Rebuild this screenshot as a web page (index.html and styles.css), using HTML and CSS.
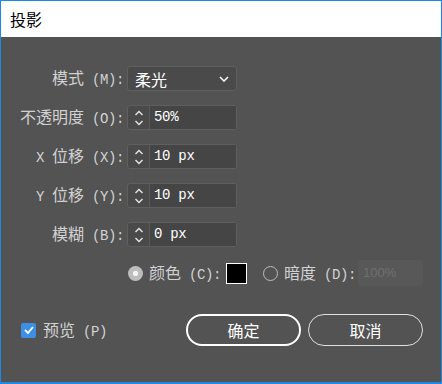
FILE: index.html
```html
<!DOCTYPE html>
<html lang="zh-CN">
<head>
    <meta charset="UTF-8">
    <title>投影</title>
    <link rel="stylesheet" href="styles.css">
</head>
<body>

    <div class="window">
        <header class="titlebar">投影</header>

        <section class="dialog">
            <div class="fields">
                <label class="field-label">模式<span class="key"> (M):</span></label>
                <div class="select">
                    <span>柔光</span>
                    <svg class="chevron" width="10" height="6" viewBox="0 0 10 6"><path d="M1 1l4 4 4-4" fill="none" stroke="#fff" stroke-width="1.5"/></svg>
                </div>

                <label class="field-label">不透明度<span class="key"> (O):</span></label>
                <div class="spin">
                    <span class="spin-arrows">
                        <svg width="10" height="18" viewBox="0 0 10 18"><path d="M1.5 6l3.5-3.5 3.5 3.5M1.5 12l3.5 3.5 3.5-3.5" fill="none" stroke="#e6e6e6" stroke-width="1.4"/></svg>
                    </span>
                    <span class="spin-value">50%</span>
                </div>

                <label class="field-label"><span class="key">X </span>位移<span class="key"> (X):</span></label>
                <div class="spin">
                    <span class="spin-arrows">
                        <svg width="10" height="18" viewBox="0 0 10 18"><path d="M1.5 6l3.5-3.5 3.5 3.5M1.5 12l3.5 3.5 3.5-3.5" fill="none" stroke="#e6e6e6" stroke-width="1.4"/></svg>
                    </span>
                    <span class="spin-value">10 px</span>
                </div>

                <label class="field-label"><span class="key">Y </span>位移<span class="key"> (Y):</span></label>
                <div class="spin">
                    <span class="spin-arrows">
                        <svg width="10" height="18" viewBox="0 0 10 18"><path d="M1.5 6l3.5-3.5 3.5 3.5M1.5 12l3.5 3.5 3.5-3.5" fill="none" stroke="#e6e6e6" stroke-width="1.4"/></svg>
                    </span>
                    <span class="spin-value">10 px</span>
                </div>

                <label class="field-label">模糊<span class="key"> (B):</span></label>
                <div class="spin">
                    <span class="spin-arrows">
                        <svg width="10" height="18" viewBox="0 0 10 18"><path d="M1.5 6l3.5-3.5 3.5 3.5M1.5 12l3.5 3.5 3.5-3.5" fill="none" stroke="#e6e6e6" stroke-width="1.4"/></svg>
                    </span>
                    <span class="spin-value">0 px</span>
                </div>
            </div>

            <div class="color-row">
                <span class="radio checked"></span>
                <span class="radio-label">颜色<span class="key"> (C):</span></span>
                <span class="swatch"></span>
                <span class="radio"></span>
                <span class="radio-label">暗度<span class="key"> (D):</span></span>
                <span class="disabled-input">100%</span>
            </div>

            <div class="footer">
                <div class="preview">
                    <span class="checkbox">
                        <svg width="10" height="8" viewBox="0 0 10 8"><path d="M1 4l3 3 5-6" fill="none" stroke="#fff" stroke-width="1.8"/></svg>
                    </span>
                    <span>预览<span class="key"> (P)</span></span>
                </div>
                <button class="btn btn-primary">确定</button>
                <button class="btn">取消</button>
            </div>
        </section>
    </div>

</body>
</html>
```

FILE: styles.css
```css
body {
    margin: 0;
    font-family: 'Noto Sans CJK SC', sans-serif;
    font-size: 16px;
}

.window {
    width: 442px;
    height: 384px;
    box-sizing: border-box;
    border: 1px solid #1e88e5;
    border-bottom-width: 2px;
    background-color: #535353;
    display: flex;
    flex-direction: column;
}

.titlebar {
    height: 36px;
    background-color: #fff;
    color: #000;
    font-size: 16px;
    line-height: 36px;
    padding-left: 9px;
}

.dialog {
    flex: 1;
    padding-top: 29px;
    color: #d2d2d2;
}

/* latin parts are half-width, 8px per char */
.key {
    font-family: 'Liberation Mono', monospace;
    font-size: 14px;
    letter-spacing: -0.4px;
}

.fields {
    display: grid;
    grid-template-columns: 123px 110px;
    column-gap: 3px;
    row-gap: 14px;
    align-items: center;
}

.field-label {
    text-align: right;
    line-height: 20px;
    white-space: nowrap;
}

.select,
.spin {
    height: 25px;
    box-sizing: border-box;
    border: 1px solid #5f5f5f;
    border-radius: 3px;
    background-color: #4a4a4a;
    display: flex;
    align-items: center;
}

.select {
    justify-content: space-between;
    padding: 0 7px 0 7px;
    color: #fff;
    line-height: 20px;
}

.chevron {
    margin-top: 1px;
}

.spin-arrows {
    width: 21px;
    height: 100%;
    display: flex;
    align-items: center;
    justify-content: center;
    border-right: 1px solid #5a5a5a;
}

.spin-value {
    flex: 1;
    height: 100%;
    line-height: 22px;
    padding-left: 4px;
    background-color: #454545;
    color: #fff;
    font-family: 'Liberation Mono', monospace;
    font-size: 14px;
    letter-spacing: -0.3px;
}

.color-row {
    display: flex;
    align-items: center;
    margin: 13px 0 0 127px;
    height: 26px;
    line-height: 20px;
}

.radio {
    width: 15px;
    height: 15px;
    border: 1.5px solid #bdbdbd;
    border-radius: 50%;
    box-sizing: border-box;
    margin-right: 6px;
}

.radio.checked {
    border: none;
    background: radial-gradient(circle, #f4f4f4 0 2.5px, #bdbdbd 3px);
}

.radio-label {
    margin-right: 5px;
}

.swatch {
    width: 21px;
    height: 21px;
    box-sizing: border-box;
    border: 1px solid #fff;
    background-color: #000;
    margin-right: 16px;
}

.disabled-input {
    width: 65px;
    height: 26px;
    box-sizing: border-box;
    margin-left: -3px;
    padding-left: 5px;
    line-height: 26px;
    background-color: #585858;
    border-radius: 3px;
    color: #707070;
    font-family: 'Liberation Sans', sans-serif;
    font-size: 13px;
}

.footer {
    display: flex;
    align-items: center;
    margin-top: 28px;
    padding-left: 20px;
}

.preview {
    display: flex;
    align-items: center;
    gap: 7px;
    width: 165px;
    line-height: 20px;
}

.checkbox {
    width: 15px;
    height: 15px;
    border-radius: 2px;
    background-color: #3d8ee5;
    display: flex;
    align-items: center;
    justify-content: center;
}

.btn {
    width: 115px;
    height: 32px;
    margin-right: 7px;
    background: transparent;
    border: 1px solid #e0e0e0;
    border-radius: 16px;
    color: #fff;
    font-family: 'Noto Sans CJK SC', sans-serif;
    font-size: 16px;
    cursor: pointer;
}

.btn-primary {
    border: 2px solid #fff;
}
```
